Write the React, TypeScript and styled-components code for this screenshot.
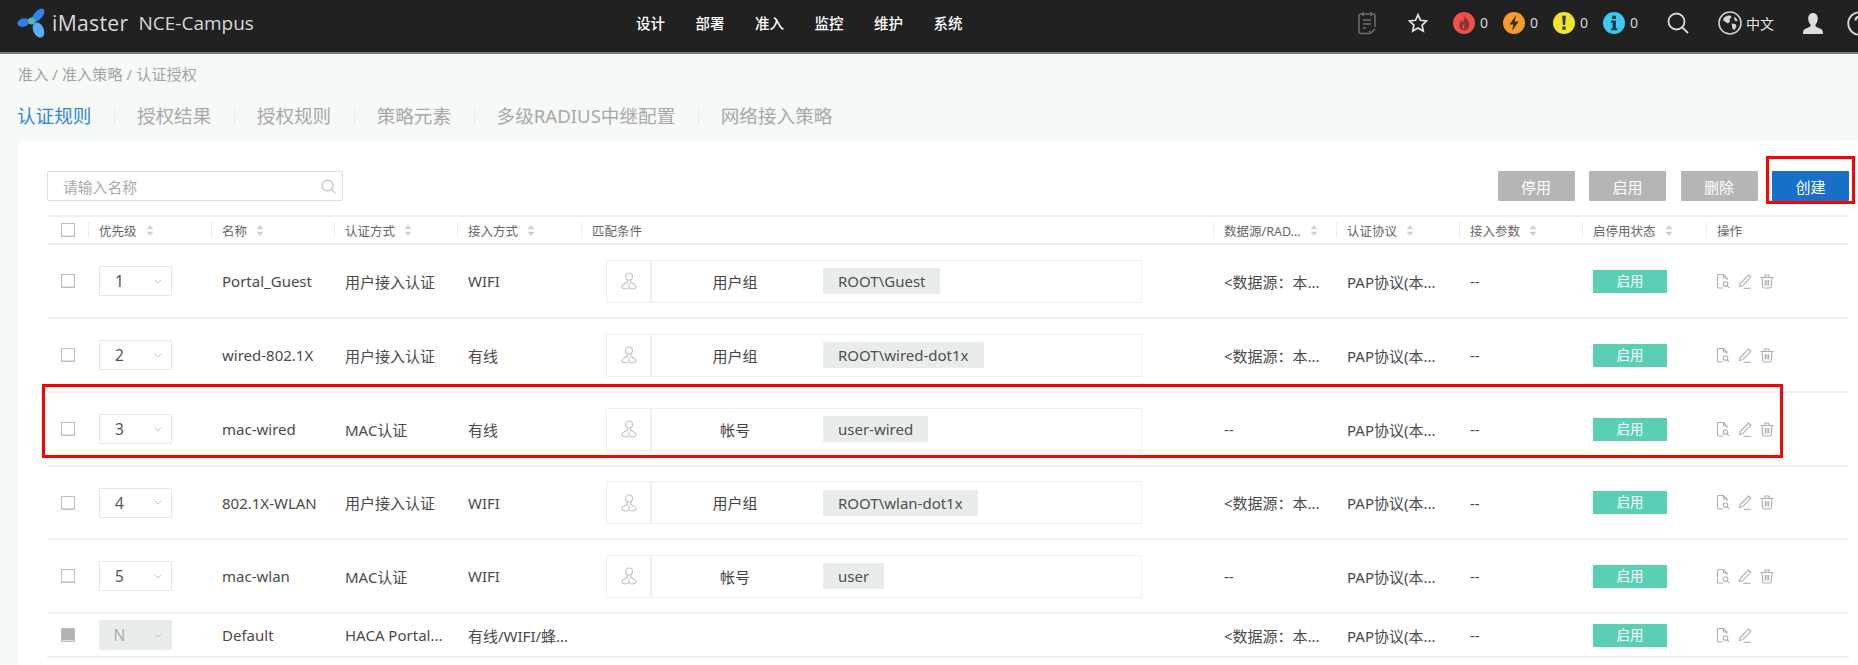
import React from "react";
import styled, { createGlobalStyle } from "styled-components";

const FONT = `"Noto Sans", "Noto Sans CJK SC", sans-serif`;
const COLS = "41px 123px 123px 123px 124px 632px 123px 123px 123px 124px 1fr";

const Global = createGlobalStyle`
  html, body { margin: 0; padding: 0; height: 100%; }
  body { background: #f5faf7; font-family: ${FONT}; overflow: hidden; }
  *, *::after { box-sizing: border-box; }
`;

const Page = styled.div`
  width: 1858px; height: 665px; display: flex; flex-direction: column; overflow: hidden;
`;
const TopBar = styled.header`
  flex: none; height: 54px; background: #212121; border-bottom: 2px solid #7c7c7c;
  display: grid; grid-template-columns: 636px 1fr; position: relative; overflow: hidden;
`;
const Brand = styled.div`
  display: flex; align-items: center; padding-left: 17px; height: 45px; color: #d8d8d8;
`;
const BrandMain = styled.span`font-size: 21.2px; margin-left: 7px; letter-spacing: .3px; font-family: "Open Sans", sans-serif;`;
const BrandSub = styled.span`font-size: 19px; margin-left: 10px; font-family: "Open Sans", sans-serif;`;
const Right = styled.div`display: flex; align-items: center; height: 46px;`;
const Nav = styled.nav`display: flex; gap: 30px; width: 722px; flex: none; margin-top: -1px;`;
const NavItem = styled.a`color: #fff; font-size: 14.5px; width: 29.5px; white-space: nowrap; font-weight: 500;`;
const Tools = styled.div`display: flex; align-items: center; height: 46px;`;
const Tool = styled.span<{ $w: number }>`
  display: inline-flex; align-items: center; flex: none; width: ${p => p.$w}px; color: #e4e4e4; font-size: 14px;
`;
const Count = styled.span`font-size: 14px; color: #d8d8d8; margin-left: 5px; line-height: 1;`;
const Lang = styled.span`font-size: 14px; color: #e6e6e6; margin-left: 4px;`;

const Crumb = styled.div`
  flex: none; height: 41px; padding: 9px 0 0 18px; font-size: 15.2px; line-height: 22px; color: #a3a3a3; white-space: pre;
`;
const Tabs = styled.div`
  flex: none; height: 46px; padding: 8px 0 0 17px; display: flex; align-items: flex-start;
`;
const Tab = styled.a<{ $on?: boolean }>`
  font-size: 18.6px; line-height: 26px; color: ${p => (p.$on ? "#2f86d6" : "#a8a8a8")}; white-space: nowrap;
`;
const TabSep = styled.i`
  width: 1px; height: 15px; background: #e4e8e6; margin: 6px 22px 0 22.5px; flex: none;
`;
const Panel = styled.main`
  flex: 1; margin-left: 18px; background: #fff; padding: 30px 9px 0 29px; min-height: 0;
`;
const Toolbar = styled.div`display: flex; justify-content: space-between; height: 30px; margin-bottom: 14px;`;
const Search = styled.div`
  width: 296px; height: 30px; border: 1px solid #dcdcdc; border-radius: 2px; display: flex; align-items: center;
  justify-content: space-between; padding: 0 6px 0 15px; font-size: 14.8px; color: #a9a9a9;
`;
const Actions = styled.div`display: flex; gap: 14.5px;`;
const Btn = styled.button<{ $primary?: boolean }>`
  width: 77px; height: 30px; border: 0; padding: 0; border-radius: 1px; font: 15px ${FONT}; color: #fff;
  background: ${p => (p.$primary ? "#176fc7" : "#b5b5b5")}; position: relative;
  ${p => p.$primary && `&::after { content: ""; position: absolute; left: -6px; top: -15px; width: 89px; height: 48px; border: 3px solid #f00; }`}
`;
const Table = styled.div`border-top: 2px solid #f0f0f0;`;
const HeadRow = styled.div`
  display: grid; grid-template-columns: ${COLS}; height: 28px; align-items: center; border-bottom: 2px solid #f0f0f0;
`;
const HeadCell = styled.div<{ $first?: boolean }>`
  height: 16px; display: flex; align-items: center; gap: 9px; padding-left: ${p => (p.$first ? 0 : 10)}px;
  font-size: 12.5px; color: #666; white-space: nowrap;
  border-left: ${p => (p.$first ? 0 : "1px solid #ececec")};
`;
const Row = styled.div<{ $h: number; $mark?: boolean }>`
  display: grid; grid-template-columns: ${COLS}; height: ${p => p.$h}px; align-items: center;
  border-bottom: 2px solid #f0f0f0; position: relative; font-size: 15px; color: #4a4a4a;
  ${p => p.$mark && `&::after { content: ""; position: absolute; left: -5px; top: -9px; width: 1741px; height: 74px; border: 3px solid #f00; pointer-events: none; }`}
`;
const Cell = styled.div`padding-left: 11px; white-space: nowrap; overflow: hidden;`;
const Check = styled.span<{ $fill?: boolean }>`
  display: block; width: 14px; height: 14px; margin-left: 14px; border: 1px solid #bdbdbd;
  box-shadow: inset 0 -1px 0 #e0e0e0;
  background: ${p => (p.$fill ? "#b3b3b3" : "#fff")};
`;
const Select = styled.div<{ $off?: boolean }>`
  width: 73px; height: 30px; margin-left: 11px; border: 1px solid ${p => (p.$off ? "#e8edeb" : "#e6e6e6")};
  border-radius: 1px; background: ${p => (p.$off ? "#e8edeb" : "#fff")}; color: ${p => (p.$off ? "#aaa" : "#555")};
  display: flex; align-items: center; justify-content: space-between; padding-right: 9px; font-size: 15.5px;
`;
const SelectVal = styled.span`width: 39px; text-align: center;`;
const Cond = styled.div`
  margin-left: 25px; width: 536px; height: 43px; border: 1px solid #efefef; display: grid;
  grid-template-columns: 45px 166px auto; align-items: center; justify-content: start;
`;
const CondIcon = styled.div`height: 100%; border-right: 2px solid #efefef; display: flex; align-items: center; justify-content: center;`;
const CondLabel = styled.div`text-align: center; color: #444;`;
const Tag = styled.span`
  margin-left: 5px; height: 26px; line-height: 26px; padding: 0 15px; background: #e8edeb; color: #4f4f4f; display: inline-block;
`;
const Status = styled.span`
  display: block; width: 74px; height: 23px; line-height: 23px; text-align: center; background: #5acfb4; color: #fff;
  font-size: 13.5px;
`;
const Ops = styled.div`display: flex; align-items: center; gap: 8px; padding-left: 11px;`;

const Sort = () => (
  <svg width="8" height="11" viewBox="0 0 8 11" fill="#d2d2d2"><path d="M4 0l3.5 4.2h-7zM4 11L.5 6.8h7z" /></svg>
);
const Chevron = () => (
  <svg width="8" height="5" viewBox="0 0 8 5" fill="none" stroke="#c4c4c4" strokeWidth="1"><path d="M.7.7L4 4l3.3-3.3" /></svg>
);
const Logo = () => (
  <svg width="28" height="31" viewBox="0 0 28 31">
    <ellipse cx="21" cy="8.5" rx="4.2" ry="8.5" transform="rotate(42 21 8.5)" fill="#2f83ea" />
    <ellipse cx="21.5" cy="23" rx="5.2" ry="8" transform="rotate(-25 21.5 23)" fill="#58aef6" />
    <ellipse cx="6.3" cy="15.5" rx="6" ry="4.2" transform="rotate(-15 6.3 15.5)" fill="#2f7fe6" />
    <circle cx="14.6" cy="14" r="3.6" fill="#58b7ad" />
  </svg>
);
const Clipboard = () => (
  <svg width="18" height="24" viewBox="0 0 18 24" fill="none" stroke="#6e6e6e" strokeWidth="1.5">
    <path d="M12 22.5H3a2 2 0 0 1-2-2V5a2 2 0 0 1 2-2h12a2 2 0 0 1 2 2v11" />
    <path d="M5 1v4M13 1v4M5 9h8M5 13h8M5 17h3M11 20l2 2 4-4" />
  </svg>
);
const Star = () => (
  <svg width="20" height="20" viewBox="0 0 20 20" fill="none" stroke="#e4e4e4" strokeWidth="1.7">
    <path d="M10 1.8l2.5 5.5 6 .7-4.4 4.1 1.2 6L10 15.1l-5.3 3 1.2-6L1.5 8l6-.7z" />
  </svg>
);
const Badge = ({ bg, kind }: { bg: string; kind: string }) => (
  <svg width="22" height="22" viewBox="0 0 23 23">
    <circle cx="11.5" cy="11.5" r="11.5" fill={bg} />
    {kind === "fire" && <path d="M12.5 3.5c.8 3.5 4.5 5.5 4.5 10 0 3.2-2.3 5.8-5.2 5.8-3 0-5.3-2.3-5.3-5.4 0-2.6 1.5-4 2.4-5.7.5 1.2.9 1.9 1.5 2.5.9-2 1.8-4.3 2.1-7.2zM11.8 11c-.4 1.800-2 2.800-2 4.600 0 1.300.9 2.200 2 2.200-.7-2 .3-4.400 0-6.800z" fill="#3d1a1a" fillRule="evenodd" opacity=".55" />}
    {kind === "bolt" && <path d="M13.5 3.5L6.8 13h4l-1.300 6.500L16.5 10h-4.200z" fill="#3a3022" />}
    {kind === "warn" && <path d="M9.700 4h3.600l-.6 9.500h-2.400zM9.800 15.200h3.400v3.300H9.800z" fill="#33331f" />}
    {kind === "info" && <path d="M9.500 4h4v3.200h-4zM8.500 9h5v8h1.500v2.200H8.500V17H10v-5.800H8.500z" fill="#1d3a47" />}
  </svg>
);
const Magnifier = ({ c = "#dcdcdc", s = 22 }: { c?: string; s?: number }) => (
  <svg width={s} height={s} viewBox="0 0 22 22" fill="none" stroke={c} strokeWidth="1.8">
    <circle cx="9.5" cy="9.5" r="8" /><path d="M15.3 15.3L21 21" />
  </svg>
);
const Globe = () => (
  <svg width="24" height="24" viewBox="0 0 24 24">
    <circle cx="12" cy="12" r="11" fill="none" stroke="#cfcfcf" strokeWidth="1.6" />
    <path d="M6 6.500c2-1.800 4.500-2.300 6.500-2l1 2-2 1.500.5 2.500-2 2-2.500-1.500L5 9zM13.500 12.500l4 .5 1 2.500-2 3.500-2-1zM16 5.500l3 2.500.5 2.500-3-1z" fill="#d4d4d4" />
  </svg>
);
const User = () => (
  <svg width="20" height="21" viewBox="0 0 20 21" fill="#dedede">
    <path d="M10 0c3 0 4.800 2.400 4.800 5.500 0 2.500-1 4.800-2.300 6v1.500c0 1 3 1.700 5 2.700 1.500.7 2.500 1.700 2.500 5.300H0c0-3.600 1-4.600 2.500-5.300 2-1 5-1.700 5-2.700v-1.500c-1.300-1.200-2.300-3.500-2.300-6C5.200 2.400 7 0 10 0z" />
  </svg>
);
const Help = () => (
  <svg width="25" height="25" viewBox="0 0 25 25" fill="none" stroke="#d8d8d8" strokeWidth="1.8">
    <circle cx="12.5" cy="12.5" r="11.3" />
    <path d="M8.500 9.500a4 4 0 1 1 6 3.500c-1.300.8-2 1.500-2 3" strokeWidth="2.2" /><path d="M12.500 17.500v2.200" strokeWidth="2.2" />
  </svg>
);
const Group = () => (
  <svg width="16" height="18" viewBox="0 0 16 18" fill="none" stroke="#c0c0c0" strokeWidth="1.1">
    <circle cx="8" cy="4.5" r="3.5" />
    <path d="M6.300 8v2.500C3.500 11.500 1 12.500 1 14.500S3 17 5 17c1.300 0 2.300-.5 3-1.500.7 1 1.700 1.500 3 1.500 2 0 4-.5 4-2.500s-2.500-3-5.300-4V8M8 11.500v4" />
  </svg>
);
const FileSearch = () => (
  <svg width="13" height="15" viewBox="0 0 13 15" fill="none" stroke="#adadad" strokeWidth="1.1">
    <path d="M6 14H1.500a1 1 0 0 1-1-1V1.500a1 1 0 0 1 1-1h5l3.500 3.500v2" /><path d="M6.500.5V4H10" />
    <circle cx="8.5" cy="10" r="2.3" /><path d="M10.200 11.800l2 2.200" />
  </svg>
);
const Pencil = () => (
  <svg width="14" height="15" viewBox="0 0 14 15" fill="none" stroke="#adadad" strokeWidth="1.1">
    <path d="M10.500 1l2.300 2.300-8.300 8.500-3 .8.700-3z" /><path d="M5.500 14.300h7" />
  </svg>
);
const Trash = () => (
  <svg width="14" height="15" viewBox="0 0 14 15" fill="none" stroke="#adadad" strokeWidth="1.1">
    <path d="M.5 3.500h13M5 3.300V1h4v2.300M2 3.500l.8 9.500a1.200 1.200 0 0 0 1.200 1h6a1.200 1.200 0 0 0 1.200-1l.8-9.500M5.300 6v5.500M7 6v5.500M8.700 6v5.500" />
  </svg>
);

const NAV = ["设计", "部署", "准入", "监控", "维护", "系统"];
const TABS = ["授权结果", "授权规则", "策略元素", "多级RADIUS中继配置", "网络接入策略"];
const HEAD = ["优先级", "名称", "认证方式", "接入方式", "匹配条件", "数据源/RAD...", "认证协议", "接入参数", "启停用状态", "操作"];
const NO_SORT = new Set(["匹配条件", "操作"]);
const SRC = "<数据源：本...";
const PAP = "PAP协议(本...";

type Rule = {
  pri: string; name: string; auth: string; access: string; h: number;
  label?: string; tag?: string; src: string; builtin?: boolean; mark?: boolean;
};
const RULES: Rule[] = [
  { pri: "1", name: "Portal_Guest", auth: "用户接入认证", access: "WIFI", label: "用户组", tag: "ROOT\\Guest", src: SRC, h: 74 },
  { pri: "2", name: "wired-802.1X", auth: "用户接入认证", access: "有线", label: "用户组", tag: "ROOT\\wired-dot1x", src: SRC, h: 74 },
  { pri: "3", name: "mac-wired", auth: "MAC认证", access: "有线", label: "帐号", tag: "user-wired", src: "--", h: 74, mark: true },
  { pri: "4", name: "802.1X-WLAN", auth: "用户接入认证", access: "WIFI", label: "用户组", tag: "ROOT\\wlan-dot1x", src: SRC, h: 73 },
  { pri: "5", name: "mac-wlan", auth: "MAC认证", access: "WIFI", label: "帐号", tag: "user", src: "--", h: 74 },
  { pri: "N", name: "Default", auth: "HACA Portal...", access: "有线/WIFI/蜂...", src: SRC, h: 44, builtin: true },
];

export default function App() {
  return (
    <Page>
      <Global />
      <TopBar>
        <Brand>
          <Logo />
          <BrandMain>iMaster</BrandMain>
          <BrandSub>NCE-Campus</BrandSub>
        </Brand>
        <Right>
          <Nav>{NAV.map(n => <NavItem key={n}>{n}</NavItem>)}</Nav>
          <Tools>
            <Tool $w={50}><Clipboard /></Tool>
            <Tool $w={45}><Star /></Tool>
            <Tool $w={50}><Badge bg="#f0504a" kind="fire" /><Count>0</Count></Tool>
            <Tool $w={50}><Badge bg="#f59b2b" kind="bolt" /><Count>0</Count></Tool>
            <Tool $w={50}><Badge bg="#f0e62e" kind="warn" /><Count>0</Count></Tool>
            <Tool $w={64}><Badge bg="#3cc8ef" kind="info" /><Count>0</Count></Tool>
            <Tool $w={51}><Magnifier /></Tool>
            <Tool $w={85}><Globe /><Lang>中文</Lang></Tool>
            <Tool $w={44}><User /></Tool>
            <Tool $w={25}><Help /></Tool>
          </Tools>
        </Right>
      </TopBar>
      <Crumb>准入 / 准入策略 / 认证授权</Crumb>
      <Tabs>
        <Tab $on>认证规则</Tab>
        {TABS.map(t => (
          <React.Fragment key={t}>
            <TabSep />
            <Tab>{t}</Tab>
          </React.Fragment>
        ))}
      </Tabs>
      <Panel>
        <Toolbar>
          <Search>请输入名称<Magnifier c="#bdbdbd" s={15} /></Search>
          <Actions>
            <Btn>停用</Btn>
            <Btn>启用</Btn>
            <Btn>删除</Btn>
            <Btn $primary>创建</Btn>
          </Actions>
        </Toolbar>
        <Table>
          <HeadRow>
            <HeadCell $first><Check /></HeadCell>
            {HEAD.map(h => (
              <HeadCell key={h}>{h}{!NO_SORT.has(h) && <Sort />}</HeadCell>
            ))}
          </HeadRow>
          {RULES.map(r => (
            <Row key={r.pri} $h={r.h} $mark={r.mark}>
              <Check $fill={r.builtin} />
              <Select $off={r.builtin}><SelectVal>{r.pri}</SelectVal><Chevron /></Select>
              <Cell>{r.name}</Cell>
              <Cell>{r.auth}</Cell>
              <Cell>{r.access}</Cell>
              {r.label ? (
                <Cond>
                  <CondIcon><Group /></CondIcon>
                  <CondLabel>{r.label}</CondLabel>
                  <Tag>{r.tag}</Tag>
                </Cond>
              ) : <div />}
              <Cell>{r.src}</Cell>
              <Cell>{PAP}</Cell>
              <Cell>--</Cell>
              <Cell><Status>启用</Status></Cell>
              <Ops>
                <FileSearch />
                <Pencil />
                {!r.builtin && <Trash />}
              </Ops>
            </Row>
          ))}
        </Table>
      </Panel>
    </Page>
  );
}
